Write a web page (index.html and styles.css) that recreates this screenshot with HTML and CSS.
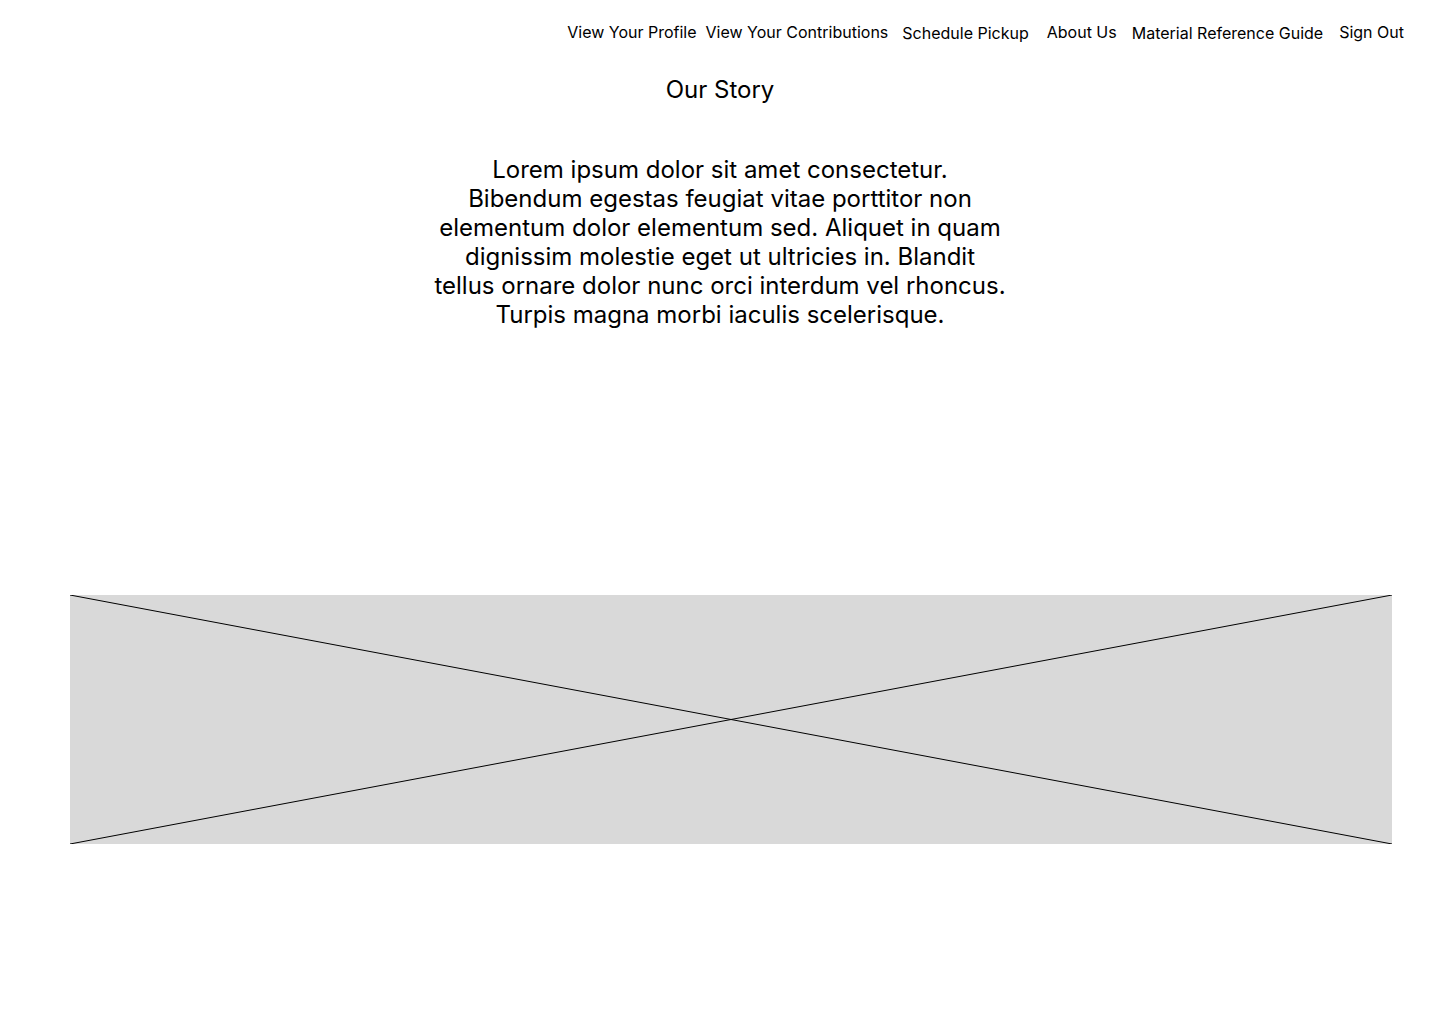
FILE: index.html
```html
<!DOCTYPE html>
<html lang="en">
<head>
<meta charset="utf-8">
<title>Our Story</title>
<link rel="stylesheet" href="styles.css">
</head>
<body>
<header class="topbar">
  <nav class="nav">
    <a class="nav-link" href="#">View Your Profile</a>
    <a class="nav-link nav-contrib" href="#">View Your Contributions</a>
    <a class="nav-link nav-low nav-schedule" href="#">Schedule Pickup</a>
    <a class="nav-link nav-about" href="#">About Us</a>
    <a class="nav-link nav-low nav-material" href="#">Material Reference Guide</a>
    <a class="nav-link nav-signout" href="#">Sign Out</a>
  </nav>
</header>
<main class="content">
  <h1 class="title">Our Story</h1>
  <p class="story">Lorem ipsum dolor sit amet consectetur. Bibendum egestas feugiat vitae porttitor non elementum dolor elementum sed. Aliquet in quam dignissim molestie eget ut ultricies in. Blandit tellus ornare dolor nunc orci interdum vel rhoncus. Turpis magna morbi iaculis scelerisque.</p>
  <div class="image-placeholder">
    <svg class="cross" viewBox="0 0 1322 249" preserveAspectRatio="none">
      <line x1="0" y1="0" x2="1322" y2="249" stroke="#000" stroke-width="1"/>
      <line x1="0" y1="249" x2="1322" y2="0" stroke="#000" stroke-width="1"/>
    </svg>
  </div>
</main>
</body>
</html>
```
FILE: styles.css
```css
* { box-sizing: border-box; }
html, body {
  margin: 0;
  padding: 0;
  background: #ffffff;
  color: #000000;
  font-family: Inter, "Noto Sans", sans-serif;
}
.topbar {
  display: flex;
  justify-content: flex-end;
  padding: 22px 36px 0 0;
}
.nav {
  display: flex;
  align-items: flex-start;
}
.nav-link {
  color: #000;
  text-decoration: none;
  font-size: 16px;
  line-height: 20px;
  white-space: nowrap;
}
.nav-low { margin-top: 1px; }
.nav-contrib { margin-left: 9px; }
.nav-schedule { margin-left: 14px; }
.nav-about { margin-left: 18px; }
.nav-material { margin-left: 15px; }
.nav-signout { margin-left: 16px; }
.content {
  display: flex;
  flex-direction: column;
  align-items: center;
}
.title {
  margin: 32px 0 0 0;
  font-size: 24px;
  font-weight: 400;
  line-height: 29px;
}
.story {
  margin: 51px 0 0 0;
  width: 572px;
  text-align: center;
  font-size: 24px;
  line-height: 29px;
}
.image-placeholder {
  margin: 266px 0 0 70px;
  align-self: flex-start;
  width: 1322px;
  height: 249px;
  background: #d9d9d9;
  position: relative;
}
.cross {
  position: absolute;
  inset: 0;
  width: 100%;
  height: 100%;
  display: block;
}
```
